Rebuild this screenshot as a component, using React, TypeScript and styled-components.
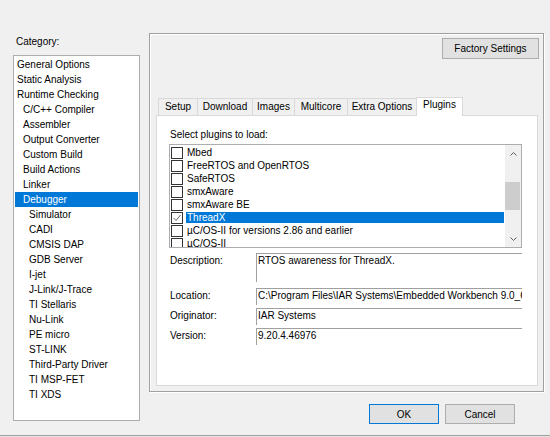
import React from 'react'
import styled, { createGlobalStyle } from 'styled-components';

const categories: [string, number][] = [
    ['General Options', 0],
    ['Static Analysis', 0],
    ['Runtime Checking', 0],
    ['C/C++ Compiler', 1],
    ['Assembler', 1],
    ['Output Converter', 1],
    ['Custom Build', 1],
    ['Build Actions', 1],
    ['Linker', 1],
    ['Debugger', 1],
    ['Simulator', 2],
    ['CADI', 2],
    ['CMSIS DAP', 2],
    ['GDB Server', 2],
    ['I-jet', 2],
    ['J-Link/J-Trace', 2],
    ['TI Stellaris', 2],
    ['Nu-Link', 2],
    ['PE micro', 2],
    ['ST-LINK', 2],
    ['Third-Party Driver', 2],
    ['TI MSP-FET', 2],
    ['TI XDS', 2],
];

const tabs: [string, number][] = [
    ['Setup', 40],
    ['Download', 56],
    ['Images', 43],
    ['Multicore', 54],
    ['Extra Options', 70],
    ['Plugins', 47],
];

const plugins = [
    'Mbed',
    'FreeRTOS and OpenRTOS',
    'SafeRTOS',
    'smxAware',
    'smxAware BE',
    'ThreadX',
    'µC/OS-II for versions 2.86 and earlier',
    'µC/OS-II',
];

const App = () => {
  return (
    <Root>
        <GlobalStyle />
        <Main>
            <LeftColumn>
                <CategoryLabel>Category:</CategoryLabel>
                <CategoryList>
                    {categories.map(([name, level]) => (
                        <CategoryItem key={name} level={level} selected={name === 'Debugger'}>{name}</CategoryItem>
                    ))}
                </CategoryList>
            </LeftColumn>
            <RightColumn>
                <GroupBox>
                    <FactoryButton>Factory Settings</FactoryButton>
                    <TabControl>
                        <TabStrip>
                            {tabs.map(([name, w]) => (
                                <Tab key={name} w={w} active={name === 'Plugins'}>{name}</Tab>
                            ))}
                        </TabStrip>
                        <TabPanel>
                            <PanelLabel>Select plugins to load:</PanelLabel>
                            <PluginList>
                                <PluginItems>
                                    {plugins.map((p) => (
                                        <PluginRow key={p}>
                                            <CheckBox>
                                                {p === 'ThreadX' && (
                                                    <svg width="10" height="10" viewBox="0 0 10 10">
                                                        <polyline points="1.5,5 4,7.5 8.5,2" fill="none" stroke="#6a6a6a" strokeWidth="1" />
                                                    </svg>
                                                )}
                                            </CheckBox>
                                            <PluginLabel selected={p === 'ThreadX'}>{p}</PluginLabel>
                                        </PluginRow>
                                    ))}
                                </PluginItems>
                                <Scrollbar>
                                    <ScrollArrow>
                                        <svg width="7" height="4" viewBox="0 0 7 4">
                                            <polyline points="0.5,3.5 3.5,0.5 6.5,3.5" fill="none" stroke="#606060" strokeWidth="1" />
                                        </svg>
                                    </ScrollArrow>
                                    <ScrollTrack>
                                        <Thumb />
                                    </ScrollTrack>
                                    <ScrollArrow>
                                        <svg width="7" height="4" viewBox="0 0 7 4">
                                            <polyline points="0.5,0.5 3.5,3.5 6.5,0.5" fill="none" stroke="#606060" strokeWidth="1" />
                                        </svg>
                                    </ScrollArrow>
                                </Scrollbar>
                            </PluginList>
                            <Form>
                                <FieldLabel>Description:</FieldLabel>
                                <FieldBox tall>RTOS awareness for ThreadX.</FieldBox>
                                <FieldLabel>Location:</FieldLabel>
                                <FieldBox>{"C:\\Program Files\\IAR Systems\\Embedded Workbench 9.0_6\\arm\\plugins\\rtos\\ThreadX"}</FieldBox>
                                <FieldLabel>Originator:</FieldLabel>
                                <FieldBox>IAR Systems</FieldBox>
                                <FieldLabel>Version:</FieldLabel>
                                <FieldBox>9.20.4.46976</FieldBox>
                            </Form>
                        </TabPanel>
                    </TabControl>
                </GroupBox>
                <Footer>
                    <DialogButton primary>OK</DialogButton>
                    <DialogButton>Cancel</DialogButton>
                </Footer>
            </RightColumn>
        </Main>
        <Separator />
    </Root>
  )
}

export default App;

const GlobalStyle = createGlobalStyle`
    html, body {
        margin: 0;
        padding: 0;
        background: #f0f0f0;
    }
    body {
        font-family: "Liberation Sans", Arial, sans-serif;
        font-size: 10px;
        color: #000;
    }
`;
const Root = styled.div`
    width: 550px;
    height: 437px;
    display: flex;
    flex-direction: column;
    overflow: hidden;
    background: #f0f0f0;
`;
const Main = styled.div`
    display: flex;
    align-items: flex-start;
    gap: 9px;
    padding-left: 13px;
    flex: 1;
`;
const LeftColumn = styled.div`
    width: 127px;
    padding-top: 36px;
    display: flex;
    flex-direction: column;
`;
const CategoryLabel = styled.div`
    line-height: 12px;
    padding-left: 3px;
    margin-bottom: 7px;
`;
const CategoryList = styled.div`
    height: 366px;
    box-sizing: border-box;
    border: 1px solid #abadb3;
    background: #fff;
    padding: 1px;
`;
const CategoryItem = styled.div<{level:number;selected?:boolean}>`
    height: 15px;
    line-height: 15px;
    padding-left: ${(props)=>2 + props.level * 6}px;
    white-space: nowrap;
    background: ${(props)=>props.selected ? '#0078d7' : 'transparent'};
    color: ${(props)=>props.selected ? '#fff' : '#000'};
`;
const RightColumn = styled.div`
    width: 395px;
    padding-top: 33px;
    display: flex;
    flex-direction: column;
`;
const GroupBox = styled.div`
    height: 359px;
    box-sizing: border-box;
    border: 1px solid #a0a0a0;
    box-shadow: 1px 1px 0 #fff, inset 1px 1px 0 #fff;
    padding: 4px 4px 5px 6px;
    display: flex;
    flex-direction: column;
`;
const BaseButton = styled.button`
    font-family: inherit;
    font-size: 10px;
    color: #000;
    padding: 0;
    box-sizing: border-box;
    background: #e1e1e1;
    border: 1px solid #adadad;
`;
const FactoryButton = styled(BaseButton)`
    align-self: flex-end;
    width: 97px;
    height: 21px;
`;
const TabControl = styled.div`
    margin-top: 38px;
    margin-right: 1px;
    flex: 1;
    display: flex;
    flex-direction: column;
`;
const TabStrip = styled.div`
    display: flex;
    align-items: flex-end;
    height: 18px;
    padding-left: 2px;
    position: relative;
    z-index: 1;
`;
const Tab = styled.div<{w:number;active?:boolean}>`
    width: ${(props)=>props.w}px;
    height: ${(props)=>props.active ? 19 : 17}px;
    margin-bottom: ${(props)=>props.active ? -1 : 0}px;
    box-sizing: border-box;
    border: 1px solid #d9d9d9;
    border-bottom: none;
    background: ${(props)=>props.active ? '#fff' : '#f0f0f0'};
    text-align: center;
    line-height: ${(props)=>props.active ? 14 : 15}px;
    white-space: nowrap;
    & + & {
        margin-left: -1px;
    }
`;
const TabPanel = styled.div`
    flex: 1;
    background: #fff;
    border: 1px solid #d9d9d9;
    padding: 13px 15px 0 12px;
    display: flex;
    flex-direction: column;
`;
const PanelLabel = styled.div`
    line-height: 12px;
    padding-left: 1px;
    margin-bottom: 3px;
`;
const PluginList = styled.div`
    height: 104px;
    box-sizing: border-box;
    border: 1px solid #abadb3;
    display: flex;
`;
const PluginItems = styled.div`
    flex: 1;
    padding-top: 1px;
    overflow: hidden;
`;
const PluginRow = styled.div`
    height: 13px;
    display: flex;
    align-items: center;
    padding-left: 1px;
`;
const CheckBox = styled.div`
    width: 12px;
    height: 12px;
    box-sizing: border-box;
    border: 1px solid #333;
    background: #fff;
    margin-right: 3px;
    flex-shrink: 0;
    display: flex;
    align-items: center;
    justify-content: center;
`;
const PluginLabel = styled.div<{selected?:boolean}>`
    flex: 1;
    height: 11px;
    line-height: 11px;
    padding-left: 1px;
    margin-right: 1px;
    white-space: nowrap;
    background: ${(props)=>props.selected ? '#0078d7' : 'transparent'};
    color: ${(props)=>props.selected ? '#fff' : '#000'};
`;
const Scrollbar = styled.div`
    width: 16px;
    background: #f0f0f0;
    display: flex;
    flex-direction: column;
`;
const ScrollArrow = styled.div`
    height: 17px;
    display: flex;
    align-items: center;
    justify-content: center;
`;
const ScrollTrack = styled.div`
    flex: 1;
    padding-top: 20px;
`;
const Thumb = styled.div`
    height: 28px;
    margin-right: 1px;
    background: #cdcdcd;
`;
const Form = styled.div`
    margin-top: 5px;
    display: grid;
    grid-template-columns: 87px 266px;
    row-gap: 3px;
    & > :nth-child(3), & > :nth-child(4) {
        margin-top: 3px;
    }
`;
const FieldLabel = styled.div`
    padding-top: 2px;
    padding-left: 1px;
    line-height: 12px;
`;
const FieldBox = styled.div<{tall?:boolean}>`
    height: ${(props)=>props.tall ? 29 : 17}px;
    box-sizing: border-box;
    border-top: 1px solid #a0a0a0;
    border-left: 1px solid #a0a0a0;
    background: #fff;
    padding: 1px 0 0 1px;
    line-height: 12px;
    white-space: nowrap;
    overflow: hidden;
`;
const Footer = styled.div`
    display: flex;
    justify-content: flex-end;
    gap: 6px;
    margin-top: 12px;
    padding-right: 29px;
`;
const DialogButton = styled(BaseButton)<{primary?:boolean}>`
    width: 70px;
    height: 20px;
    border-color: ${(props)=>props.primary ? '#0078d7' : '#adadad'};
`;
const Separator = styled.div`
    height: 0;
    border-top: 1px solid #a0a0a0;
    border-bottom: 1px solid #e3e3e3;
`;
